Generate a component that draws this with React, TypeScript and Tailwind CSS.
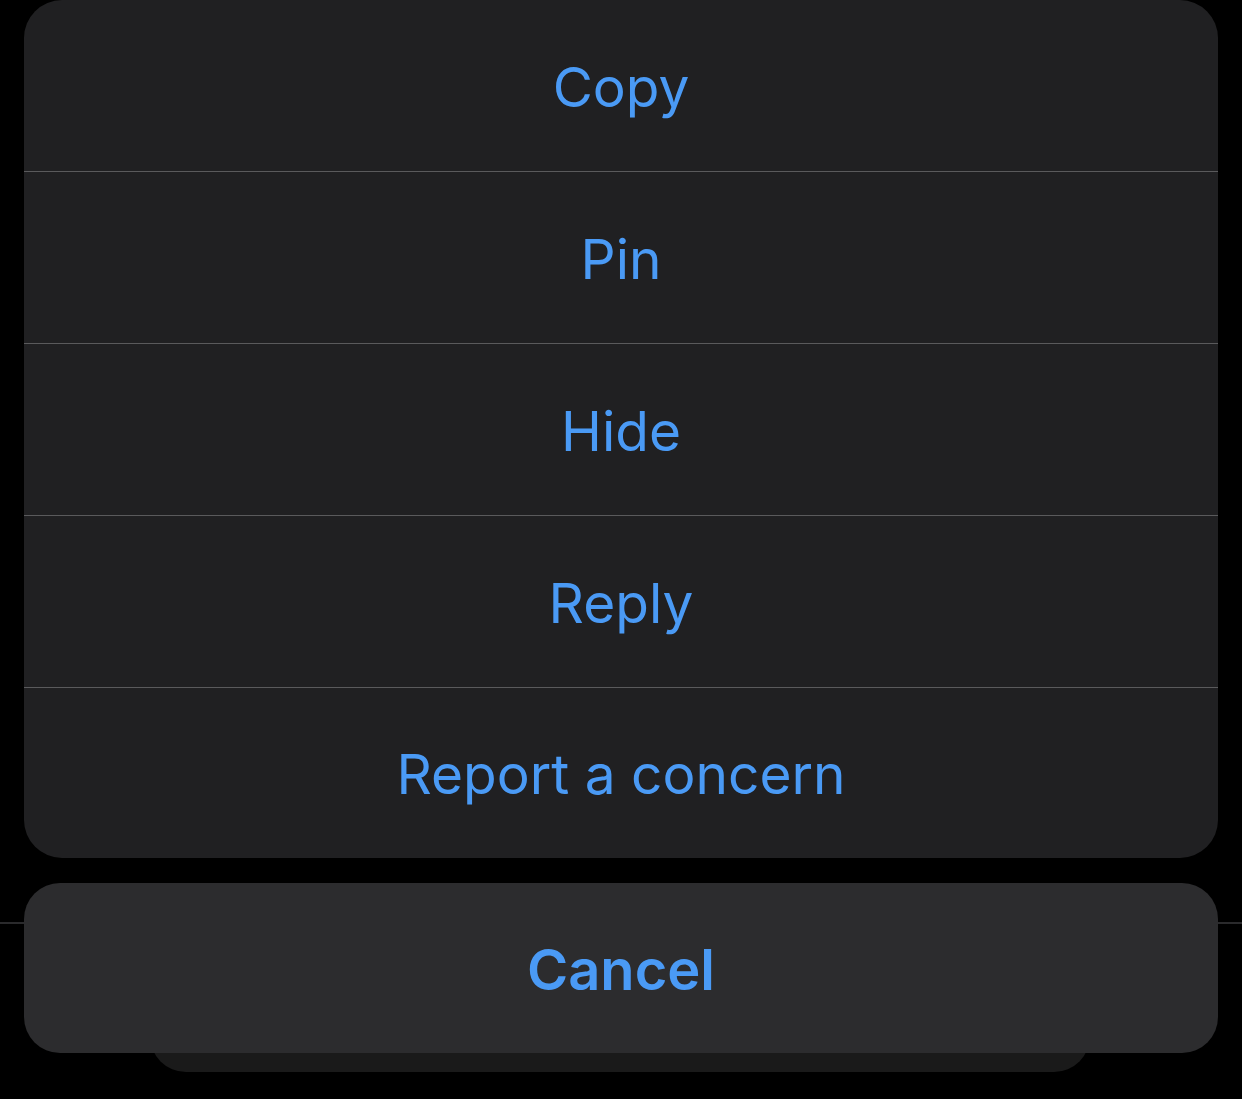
import React from "react";

const items = ["Copy", "Pin", "Hide", "Reply", "Report a concern"];

export default function App() {
  return (
    <div
      className="relative w-[1242px] h-[1099px] bg-black overflow-hidden"
      style={{ fontFamily: "Inter, 'Noto Sans', sans-serif" }}
    >
      <div className="absolute left-0 right-0 top-[922px] h-[2px] bg-[#2a2a2c]" />
      <div className="absolute left-[150px] w-[940px] top-[1000px] h-[72px] rounded-[36px] bg-[#1a1a1a]" />
      <div className="relative flex flex-col px-[24px] pt-0">
        <div className="flex flex-col rounded-[38px] bg-[#202022] overflow-hidden">
          {items.map((t, i) => (
            <div key={t} className="flex flex-col">
              <div
                className={
                  (i === items.length - 1 ? "h-[170px]" : "h-[171px]") +
                  " flex items-center justify-center pt-[3px] text-[55px] text-[#4a9af5]"
                }
              >
                {t}
              </div>
              {i < items.length - 1 && <div className="h-px bg-[#5a5a5c]" />}
            </div>
          ))}
        </div>
        <div className="mt-[25px] h-[170px] rounded-[36px] bg-[#2c2c2e] flex items-center justify-center pt-[3px] text-[56px] font-semibold text-[#4a9af5]">
          Cancel
        </div>
      </div>
    </div>
  );
}
